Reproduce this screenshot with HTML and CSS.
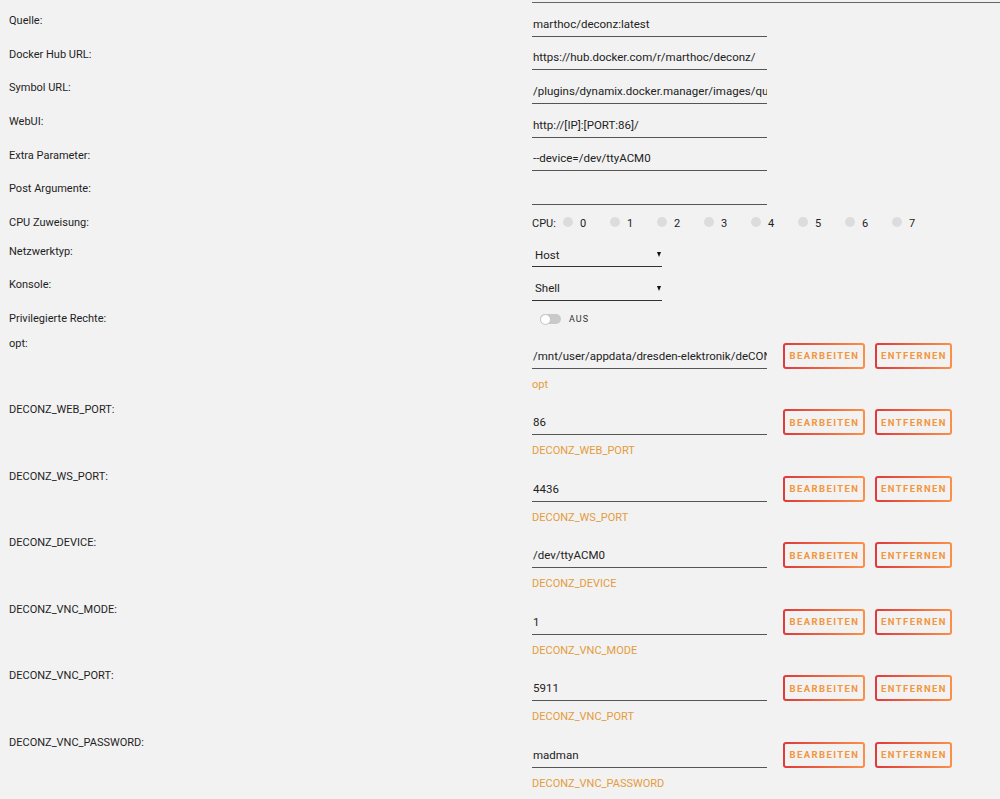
FILE: index.html
```html
<!DOCTYPE html>
<html lang="de">
<head>
<meta charset="utf-8">
<title>Container bearbeiten</title>
<link rel="stylesheet" href="styles.css">
</head>
<body>
<div class="page">
  <div class="top-rule"></div>

  <div class="row basic"><div class="lbl">Quelle:</div><div class="field"><input class="txt" value="marthoc/deconz:latest"></div></div>
  <div class="row basic"><div class="lbl">Docker Hub URL:</div><div class="field"><input class="txt" value="https://hub.docker.com/r/marthoc/deconz/"></div></div>
  <div class="row basic"><div class="lbl">Symbol URL:</div><div class="field"><input class="txt" value="/plugins/dynamix.docker.manager/images/question.png"></div></div>
  <div class="row basic"><div class="lbl">WebUI:</div><div class="field"><input class="txt" value="http://[IP]:[PORT:86]/"></div></div>
  <div class="row basic"><div class="lbl">Extra Parameter:</div><div class="field"><input class="txt" value="--device=/dev/ttyACM0"></div></div>
  <div class="row basic"><div class="lbl">Post Argumente:</div><div class="field"><input class="txt" value=""></div></div>

  <div class="row cpu-row">
    <div class="lbl">CPU Zuweisung:</div>
    <div class="cpus">
      <span class="cpu-lbl">CPU:</span>
      <span class="cpu"><span class="dot"></span>0</span>
      <span class="cpu"><span class="dot"></span>1</span>
      <span class="cpu"><span class="dot"></span>2</span>
      <span class="cpu"><span class="dot"></span>3</span>
      <span class="cpu"><span class="dot"></span>4</span>
      <span class="cpu"><span class="dot"></span>5</span>
      <span class="cpu"><span class="dot"></span>6</span>
      <span class="cpu"><span class="dot"></span>7</span>
    </div>
  </div>

  <div class="row sel-row"><div class="lbl">Netzwerktyp:</div><div class="field"><div class="sel"><span>Host</span><span class="caret"></span></div></div></div>
  <div class="row sel-row"><div class="lbl">Konsole:</div><div class="field"><div class="sel"><span>Shell</span><span class="caret"></span></div></div></div>

  <div class="row priv-row">
    <div class="lbl">Privilegierte Rechte:</div>
    <div class="switch-wrap"><span class="switch"><span class="knob"></span></span><span class="switch-txt">AUS</span></div>
  </div>

  <div class="row cfg"><div class="lbl">opt:</div><div class="field"><div class="line"><input class="txt" value="/mnt/user/appdata/dresden-elektronik/deCONZ"><button class="btn b1">BEARBEITEN</button><button class="btn b2">ENTFERNEN</button></div><div class="desc">opt</div></div></div>
  <div class="row cfg"><div class="lbl">DECONZ_WEB_PORT:</div><div class="field"><div class="line"><input class="txt" value="86"><button class="btn b1">BEARBEITEN</button><button class="btn b2">ENTFERNEN</button></div><div class="desc">DECONZ_WEB_PORT</div></div></div>
  <div class="row cfg"><div class="lbl">DECONZ_WS_PORT:</div><div class="field"><div class="line"><input class="txt" value="4436"><button class="btn b1">BEARBEITEN</button><button class="btn b2">ENTFERNEN</button></div><div class="desc">DECONZ_WS_PORT</div></div></div>
  <div class="row cfg"><div class="lbl">DECONZ_DEVICE:</div><div class="field"><div class="line"><input class="txt" value="/dev/ttyACM0"><button class="btn b1">BEARBEITEN</button><button class="btn b2">ENTFERNEN</button></div><div class="desc">DECONZ_DEVICE</div></div></div>
  <div class="row cfg"><div class="lbl">DECONZ_VNC_MODE:</div><div class="field"><div class="line"><input class="txt" value="1"><button class="btn b1">BEARBEITEN</button><button class="btn b2">ENTFERNEN</button></div><div class="desc">DECONZ_VNC_MODE</div></div></div>
  <div class="row cfg"><div class="lbl">DECONZ_VNC_PORT:</div><div class="field"><div class="line"><input class="txt" value="5911"><button class="btn b1">BEARBEITEN</button><button class="btn b2">ENTFERNEN</button></div><div class="desc">DECONZ_VNC_PORT</div></div></div>
  <div class="row cfg"><div class="lbl">DECONZ_VNC_PASSWORD:</div><div class="field"><div class="line"><input class="txt" value="madman"><button class="btn b1">BEARBEITEN</button><button class="btn b2">ENTFERNEN</button></div><div class="desc">DECONZ_VNC_PASSWORD</div></div></div>
</div>
</body>
</html>
```
FILE: styles.css
```css
* { box-sizing: border-box; }
html, body { margin: 0; padding: 0; }
body {
  background: #f2f2f2;
  font-family: Roboto, "Liberation Sans", sans-serif;
  color: #222;
  overflow: hidden;
}
.page { width: 1000px; }
.top-rule {
  height: 3px;
  margin-left: 532px;
  border-bottom: 1px solid #666;
}
.row {
  display: grid;
  grid-template-columns: 532px 1fr;
}
.lbl {
  padding: 10px 0 0 9px;
  font-size: 11px;
  line-height: 16px;
  color: #1e1e1e;
}
.basic { height: 33.67px; }
.basic .field {
  display: flex;
  align-items: flex-end;
}
.txt {
  width: 235px;
  height: 25px;
  border: 0;
  border-bottom: 1px solid #555;
  background: transparent;
  font-family: Roboto, "Liberation Sans", sans-serif;
  font-size: 11.5px;
  color: #222;
  padding: 0 0 0 1px;
  margin: 0;
  outline: none;
  flex: none;
}

/* CPU */
.cpu-row { height: 29px; }
.cpus {
  display: flex;
  padding-top: 11px;
  font-size: 11px;
  line-height: 16px;
}
.cpu-lbl { width: 31px; flex: none; }
.cpu {
  display: flex;
  width: 47px;
  flex: none;
  gap: 7px;
}
.dot {
  width: 10px;
  height: 10px;
  border-radius: 50%;
  background: #dcdcdc;
  margin-top: 1px;
  flex: none;
}

/* selects */
.sel-row { height: 33.5px; }
.sel-row .field {
  display: flex;
  align-items: flex-end;
}
.sel {
  width: 130px;
  height: 25px;
  border-bottom: 1px solid #333;
  display: flex;
  align-items: center;
  justify-content: space-between;
  padding: 1px 1px 0 3px;
  font-size: 11.5px;
}
.caret {
  width: 0;
  height: 0;
  border-left: 2.5px solid transparent;
  border-right: 2.5px solid transparent;
  border-top: 5px solid #111;
}

/* switch */
.priv-row { height: 25px; }
.switch-wrap {
  display: flex;
  align-items: center;
  padding: 11px 0 0 8px;
  gap: 8px;
}
.switch {
  position: relative;
  width: 21px;
  height: 10px;
  border-radius: 5px;
  background: #c9c9c9;
  display: block;
}
.knob {
  position: absolute;
  left: 0;
  top: -0.5px;
  width: 11px;
  height: 11px;
  border-radius: 50%;
  background: #fff;
  border: 1px solid #c4c4c4;
}
.switch-txt {
  font-size: 9px;
  letter-spacing: 1px;
  color: #333;
  line-height: 10px;
}

/* config rows */
.cfg { height: 66.5px; }
.cfg .field { padding-top: 17px; }
.line {
  display: flex;
  align-items: flex-end;
}
.btn {
  height: 26px;
  margin: 0 0 0 16px;
  padding: 0 0 0 1px;
  border: 2px solid transparent;
  border-radius: 3px;
  background:
    linear-gradient(#f2f2f2, #f2f2f2) padding-box,
    linear-gradient(90deg, #e03a3a 0%, #fb9048 100%) border-box;
  font-family: Roboto, "Liberation Sans", sans-serif;
  font-size: 9.5px;
  font-weight: 700;
  letter-spacing: 1.4px;
  color: #f2963f;
  text-align: center;
  flex: none;
}
.b1 { width: 82px; }
.b2 { width: 77px; margin-left: 10px; }
.desc {
  margin-top: 8px;
  font-size: 11px;
  line-height: 16px;
  color: #e49c3c;
}
```
